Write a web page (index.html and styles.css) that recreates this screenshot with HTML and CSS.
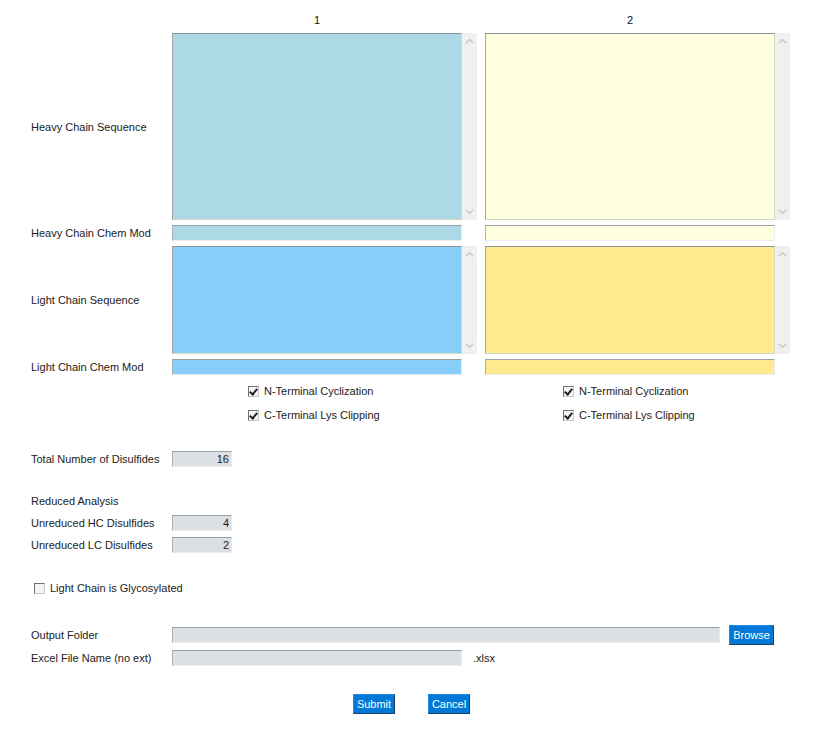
FILE: index.html
```html
<!DOCTYPE html>
<html lang="en">
	<head>
		<meta charset="utf-8">
		<title>Disulfide Analysis</title>
		<link rel="stylesheet" href="styles.css">
	</head>
	<body>
		<div class="page">
			<div class="sheet">
				<div></div>
				<div class="colhead">1</div>
				<div class="colhead">2</div>

				<div class="label">Heavy Chain Sequence</div>
				<div class="seq">
					<textarea class="hc1 tall"></textarea>
					<div class="scroll">
						<svg width="9" height="6" viewBox="0 0 9 6"><polyline points="1,5 4.5,1.5 8,5" fill="none" stroke="#c2c2c2" stroke-width="1.2"/></svg>
						<svg width="9" height="6" viewBox="0 0 9 6"><polyline points="1,1 4.5,4.5 8,1" fill="none" stroke="#c2c2c2" stroke-width="1.2"/></svg>
					</div>
				</div>
				<div class="seq">
					<textarea class="hc2 tall"></textarea>
					<div class="scroll">
						<svg width="9" height="6" viewBox="0 0 9 6"><polyline points="1,5 4.5,1.5 8,5" fill="none" stroke="#c2c2c2" stroke-width="1.2"/></svg>
						<svg width="9" height="6" viewBox="0 0 9 6"><polyline points="1,1 4.5,4.5 8,1" fill="none" stroke="#c2c2c2" stroke-width="1.2"/></svg>
					</div>
				</div>

				<div class="label">Heavy Chain Chem Mod</div>
				<div><input type="text" class="mod hc1"></div>
				<div><input type="text" class="mod hc2"></div>

				<div class="label">Light Chain Sequence</div>
				<div class="seq">
					<textarea class="lc1 short"></textarea>
					<div class="scroll">
						<svg width="9" height="6" viewBox="0 0 9 6"><polyline points="1,5 4.5,1.5 8,5" fill="none" stroke="#c2c2c2" stroke-width="1.2"/></svg>
						<svg width="9" height="6" viewBox="0 0 9 6"><polyline points="1,1 4.5,4.5 8,1" fill="none" stroke="#c2c2c2" stroke-width="1.2"/></svg>
					</div>
				</div>
				<div class="seq">
					<textarea class="lc2 short"></textarea>
					<div class="scroll">
						<svg width="9" height="6" viewBox="0 0 9 6"><polyline points="1,5 4.5,1.5 8,5" fill="none" stroke="#c2c2c2" stroke-width="1.2"/></svg>
						<svg width="9" height="6" viewBox="0 0 9 6"><polyline points="1,1 4.5,4.5 8,1" fill="none" stroke="#c2c2c2" stroke-width="1.2"/></svg>
					</div>
				</div>

				<div class="label">Light Chain Chem Mod</div>
				<div><input type="text" class="mod lc1"></div>
				<div><input type="text" class="mod lc2"></div>

				<div></div>
				<div class="checks first">
					<label class="check"><span class="box on"></span>N-Terminal Cyclization</label>
					<label class="check"><span class="box on"></span>C-Terminal Lys Clipping</label>
				</div>
				<div class="checks second">
					<label class="check"><span class="box on"></span>N-Terminal Cyclization</label>
					<label class="check"><span class="box on"></span>C-Terminal Lys Clipping</label>
				</div>
			</div>

			<div class="row total">
				<span class="name">Total Number of Disulfides</span>
				<input type="text" class="num" value="16">
			</div>

			<div class="row reduced">Reduced Analysis</div>
			<div class="row hc">
				<span class="name">Unreduced HC Disulfides</span>
				<input type="text" class="num" value="4">
			</div>
			<div class="row lc">
				<span class="name">Unreduced LC Disulfides</span>
				<input type="text" class="num" value="2">
			</div>

			<label class="row glyco check"><span class="box"></span>Light Chain is Glycosylated</label>

			<div class="row folder">
				<span class="name">Output Folder</span>
				<input type="text" class="path">
				<button type="button" class="btn browse">Browse</button>
			</div>
			<div class="row excel">
				<span class="name">Excel File Name (no ext)</span>
				<input type="text" class="file">
				<span class="ext">.xlsx</span>
			</div>

			<div class="actions">
				<button type="button" class="btn">Submit</button>
				<button type="button" class="btn">Cancel</button>
			</div>
		</div>
	</body>
</html>
```

FILE: styles.css
```css
body {
	margin: 0;
	background: #fff;
	font: 11px "Liberation Sans", Arial, sans-serif;
	color: #222;
}

.page {
	padding: 12px 0 0 31px;
}

/* label column + two sequence columns */
.sheet {
	display: grid;
	grid-template-columns: 133px 305px 305px;
	column-gap: 8px;
	row-gap: 5px;
}

.colhead {
	height: 16px;
	line-height: 16px;
	text-align: center;
	color: #111;
	padding-right: 15px;
}

.label {
	align-self: center;
	white-space: nowrap;
}

.seq {
	display: flex;
}

textarea {
	width: 290px;
	margin: 0;
	padding: 0;
	resize: none;
	box-sizing: border-box;
	border: 1px solid #d8d8c8;
	border-top: 1px solid #8d9497;
	border-left: 1px solid #a0a4a0;
	outline: none;
}

.tall { height: 187px; }
.short { height: 108px; }

.scroll {
	width: 15px;
	background: #f0f0f0;
	display: flex;
	flex-direction: column;
	justify-content: space-between;
	align-items: center;
	padding: 5px 0;
	box-sizing: border-box;
}

.hc1 { background: #add8e6; }
.hc2 { background: #ffffe0; }
.lc1 { background: #87cefa; }
.lc2 { background: #ffeb8e; }

input {
	margin: 0;
	padding: 0 2px;
	box-sizing: border-box;
	height: 16px;
	font: 11px "Liberation Sans", Arial, sans-serif;
	color: #222;
	border: 1px solid #ececec;
	border-top: 1px solid #9aa0a4;
	border-left: 1px solid #aab0b4;
	outline: none;
}

.mod {
	width: 290px;
	display: block;
}

.checks {
	display: flex;
	flex-direction: column;
	margin-top: -1px;
}

.checks.first { padding-left: 76px; }
.checks.second { padding-left: 78px; }

.check {
	display: flex;
	align-items: center;
	height: 24px;
	gap: 5px;
	color: #222;
}

.box {
	width: 9px;
	height: 9px;
	border: 1px solid #707070;
	border-right-color: #c8c8c8;
	border-bottom-color: #c8c8c8;
	background: #f4f4f4;
	position: relative;
}

.box.on::after {
	content: "";
	position: absolute;
	left: 2px;
	top: 0px;
	width: 3px;
	height: 6px;
	border: solid #222;
	border-width: 0 2px 2px 0;
	transform: rotate(40deg);
}

.row {
	display: flex;
	align-items: center;
	height: 16px;
}

.name {
	width: 141px;
	flex: none;
}

.num {
	width: 60px;
	text-align: right;
	background: #dcdfe4;
}

.total { margin-top: 24px; }
.reduced { margin-top: 26px; }
.hc { margin-top: 6px; }
.lc { margin-top: 6px; }

.glyco {
	margin-top: 27px;
	margin-left: 3px;
	height: 16px;
}

.folder {
	margin-top: 29px;
	height: 20px;
}

.path {
	width: 548px;
	background: #dcdfe4;
}

.file {
	width: 290px;
	background: #dcdfe4;
}

.ext {
	margin-left: 11px;
}

.excel { margin-top: 5px; }

.btn {
	height: 20px;
	padding: 0 2px;
	margin: 0;
	background: #0078d7;
	color: #fff;
	font: 11px "Liberation Sans", Arial, sans-serif;
	border: 1px solid #1b8ae6;
	border-right-color: #1d3f66;
	border-bottom-color: #1d3f66;
	cursor: pointer;
}

.browse {
	margin-left: 9px;
	width: 45px;
}

.actions {
	display: flex;
	gap: 33px;
	margin: 28px 0 0 322px;
}

.actions .btn {
	width: 42px;
}
```
